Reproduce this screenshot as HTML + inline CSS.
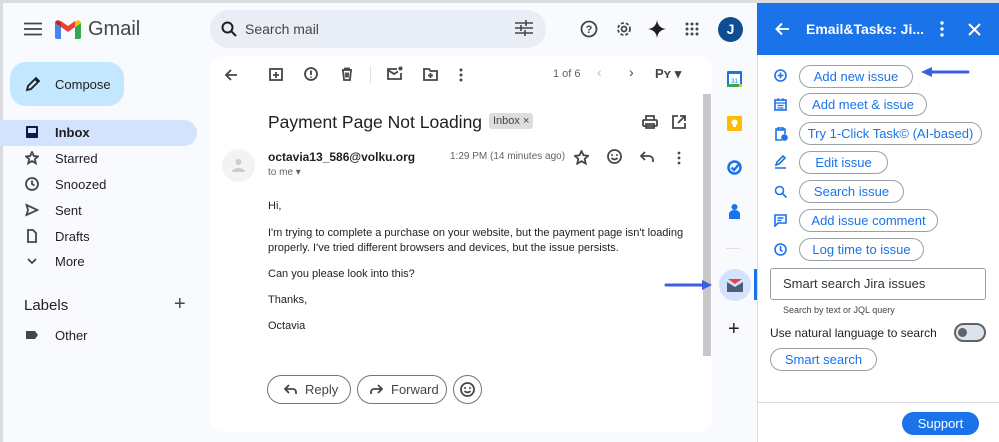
<!DOCTYPE html>
<html><head><meta charset="utf-8"><style>
*{box-sizing:border-box;margin:0;padding:0}
body{width:999px;height:442px;overflow:hidden;background:#f8fafd;font-family:"Liberation Sans",Arial,sans-serif;color:#1f1f1f;position:relative}
.a{position:absolute}
.nav{position:absolute;left:0;width:197px;height:26px;font-size:13px;line-height:26px}
.nav span{position:absolute;left:55px}
.nav svg{position:absolute;left:25px;top:5px}
.ic{fill:none;stroke:#444746;stroke-width:1.8}
.pb{position:absolute;left:799px;height:23px;border:1px solid #9aa0a6;border-radius:12px;color:#1a73e8;font-size:13px;line-height:21px;text-align:center;background:#fff}
.pi{position:absolute;left:774px;stroke:#1a73e8;fill:none;stroke-width:1.6}
.body{font-size:11px;color:#222;position:absolute;left:268px}
.rb{position:absolute;top:375px;height:29px;border:1px solid #747775;border-radius:15px;font-size:13px;line-height:27px;color:#444}
</style></head><body>
<div class="a" style="left:0;top:0;width:999px;height:3px;background:#dadce0"></div>
<div class="a" style="left:0;top:0;width:3px;height:442px;background:#dadce0"></div>
<svg class="a" style="left:24px;top:22px" width="18" height="14"><path d="M0 1.5h18M0 7h18M0 12.5h18" stroke="#444746" stroke-width="1.8"/></svg>
<svg class="a" style="left:55px;top:19px" width="26" height="20" viewBox="0 0 26 20"><path d="M0 4v14a2 2 0 002 2h4V8z" fill="#4285f4"/><path d="M26 4v14a2 2 0 01-2 2h-4V8z" fill="#34a853"/><path d="M6 8l7 5 7-5V2l-7 5-7-5z" fill="#ea4335"/><path d="M0 4a3 3 0 015-2l1 0.7V8L0 4z" fill="#c5221f"/><path d="M26 4a3 3 0 00-5-2l-1 .7V8z" fill="#fbbc04"/></svg>
<div class="a" style="left:88px;top:18px;font-size:20px;color:#444746">Gmail</div>
<div class="a" style="left:210px;top:10px;width:336px;height:38px;border-radius:19px;background:#e9eef6"></div>
<svg class="a" style="left:221px;top:21px" width="16" height="16"><circle cx="6.5" cy="6.5" r="5" fill="none" stroke="#1f1f1f" stroke-width="2"/><path d="M10 10l5 5" stroke="#1f1f1f" stroke-width="2"/></svg>
<div class="a" style="left:245px;top:21px;font-size:14px;color:#444746">Search mail</div>
<svg class="a" style="left:515px;top:20px" width="18" height="16"><path d="M0 3h18M0 8h18M0 13h18" stroke="#444746" stroke-width="1.6"/><path d="M11 0v6M6 5v6M10 10v6" stroke="#444746" stroke-width="1.6"/></svg>
<svg class="a" style="left:580px;top:20px" width="18" height="18"><circle cx="9" cy="9" r="7.5" class="ic" stroke-width="1.6"/><text x="9" y="13" font-size="11" text-anchor="middle" fill="#444746" font-family="Liberation Sans" font-weight="bold">?</text></svg>
<svg class="a" style="left:615px;top:20px" width="18" height="18"><circle cx="9" cy="9" r="6" class="ic" stroke-width="3" stroke-dasharray="3 2"/><circle cx="9" cy="9" r="2.5" class="ic" stroke-width="1.6"/></svg>
<svg class="a" style="left:648px;top:20px" width="18" height="18"><path d="M9 0Q10 8 18 9Q10 10 9 18Q8 10 0 9Q8 8 9 0z" fill="#1f1f1f"/></svg>
<svg class="a" style="left:685px;top:22px" width="14" height="14"><g fill="#444746"><circle cx="2" cy="2" r="1.5"/><circle cx="7" cy="2" r="1.5"/><circle cx="12" cy="2" r="1.5"/><circle cx="2" cy="7" r="1.5"/><circle cx="7" cy="7" r="1.5"/><circle cx="12" cy="7" r="1.5"/><circle cx="2" cy="12" r="1.5"/><circle cx="7" cy="12" r="1.5"/><circle cx="12" cy="12" r="1.5"/></g></svg>
<div class="a" style="left:718px;top:17px;width:25px;height:25px;border-radius:50%;background:#0f4c91;color:#fff;font-size:14px;font-weight:bold;text-align:center;line-height:25px">J</div>
<div class="a" style="left:10px;top:62px;width:114px;height:44px;border-radius:16px;background:#c2e7ff"></div>
<svg class="a" style="left:25px;top:76px" width="16" height="16"><path d="M2 14l1-4 8-8 3 3-8 8z M10 3l3 3" fill="none" stroke="#1f1f1f" stroke-width="1.8"/></svg>
<div class="a" style="left:55px;top:77px;font-size:13px;font-weight:500">Compose</div>
<div class="nav" style="top:120px;background:#d3e3fd;border-radius:0 13px 13px 0;font-weight:bold"><svg width="14" height="14"><rect x="1" y="1" width="12" height="12" rx="1" fill="#041e49"/><rect x="3" y="3" width="8" height="5" fill="#d3e3fd"/></svg><span>Inbox</span></div>
<div class="nav" style="top:146px"><svg width="14" height="14"><path d="M7 1l1.8 4 4.2.4-3.2 2.8 1 4.1L7 10.1 3.2 12.3l1-4.1L1 5.4l4.2-.4z" class="ic" stroke-width="1.3"/></svg><span>Starred</span></div>
<div class="nav" style="top:172px"><svg width="14" height="14"><circle cx="7" cy="7" r="6" class="ic" stroke-width="1.4"/><path d="M7 3.5V7l2.5 1.5" class="ic" stroke-width="1.4"/></svg><span>Snoozed</span></div>
<div class="nav" style="top:198px"><svg width="14" height="14"><path d="M1.5 2l11 5-11 5 1.5-5z" class="ic" stroke-width="1.4"/></svg><span>Sent</span></div>
<div class="nav" style="top:224px"><svg width="14" height="14"><path d="M3 1h5l3 3v9H3z" class="ic" stroke-width="1.4"/></svg><span>Drafts</span></div>
<div class="nav" style="top:249px"><svg width="14" height="14"><path d="M3 5l4 4 4-4" class="ic" stroke-width="1.4"/></svg><span>More</span></div>
<div class="a" style="left:24px;top:297px;font-size:15px;font-weight:500">Labels</div>
<div class="a" style="left:174px;top:293px;font-size:20px;color:#444746">+</div>
<div class="nav" style="top:323px"><svg width="14" height="14"><path d="M1 3h9l3 4-3 4H1z" fill="#444746"/></svg><span>Other</span></div>
<div class="a" style="left:210px;top:56px;width:502px;height:376px;background:#fff;border-radius:14px"></div>
<div class="a" style="left:703px;top:94px;width:8px;height:262px;background:#c7c7c7"></div>
<svg class="a" style="left:224px;top:68px" width="14" height="14"><path d="M13 7H2M7 2L2 7l5 5" class="ic" stroke-width="1.6"/></svg>
<svg class="a" style="left:269px;top:67px" width="14" height="14"><rect x="1" y="2" width="12" height="11" class="ic" stroke-width="1.5"/><path d="M7 5v6M4 8h6" class="ic" stroke-width="1.5"/></svg>
<svg class="a" style="left:304px;top:67px" width="14" height="14"><circle cx="7" cy="7" r="6" class="ic" stroke-width="1.5"/><path d="M7 3.5v4.5M7 9.5v1.2" class="ic" stroke-width="1.5"/></svg>
<svg class="a" style="left:340px;top:67px" width="14" height="14"><path d="M2 3h10M5 3V1.5h4V3M3 3l1 10h6l1-10M6 5.5v5M8 5.5v5" class="ic" stroke-width="1.4"/></svg>
<div class="a" style="left:370px;top:66px;width:1px;height:18px;background:#e0e0e0"></div>
<svg class="a" style="left:387px;top:66px" width="16" height="15"><path d="M10 3H1v10h13V7" class="ic" stroke-width="1.5"/><path d="M1 4l6 4 4-2.5" class="ic" stroke-width="1.4"/><circle cx="13.5" cy="2.5" r="2" fill="#444746"/></svg>
<svg class="a" style="left:423px;top:67px" width="15" height="14"><path d="M1 2h5l1.5 2H14v9H1z" class="ic" stroke-width="1.4"/><path d="M7.5 6v5M5 8.5h5" class="ic" stroke-width="1.4"/></svg>
<svg class="a" style="left:459px;top:68px" width="4" height="14"><circle cx="2" cy="2" r="1.5" fill="#444746"/><circle cx="2" cy="7" r="1.5" fill="#444746"/><circle cx="2" cy="12" r="1.5" fill="#444746"/></svg>
<div class="a" style="left:553px;top:68px;font-size:11px;color:#5f6368">1 of 6</div>
<div class="a" style="left:597px;top:64px;font-size:14px;color:#bbb">&#8249;</div>
<div class="a" style="left:629px;top:64px;font-size:14px;color:#444">&#8250;</div>
<div class="a" style="left:655px;top:66px;font-size:13px;color:#444;font-weight:bold">Pʏ ▾</div>
<div class="a" style="left:268px;top:112px;font-size:17.5px;color:#1f1f1f">Payment Page Not Loading</div>
<div class="a" style="left:489px;top:113px;height:16px;padding:0 4px;background:#ddd;font-size:11px;color:#444;line-height:16px;border-radius:3px">Inbox ×</div>
<svg class="a" style="left:642px;top:115px" width="16" height="14"><rect x="1" y="5" width="14" height="6" rx="1" class="ic" stroke-width="1.5"/><path d="M4 5V1h8v4M4 9h8v4H4z" class="ic" stroke-width="1.5"/></svg>
<svg class="a" style="left:672px;top:115px" width="14" height="14"><path d="M6 1H1v12h12V8M8 1h5v5M13 1L6 8" class="ic" stroke-width="1.5"/></svg>
<div class="a" style="left:222px;top:149px;width:33px;height:33px;border-radius:50%;background:#f1f3f4"></div>
<svg class="a" style="left:232px;top:158px" width="13" height="14"><circle cx="6.5" cy="4" r="3" fill="#ccc"/><path d="M0 14a6.5 4 0 0113 0z" fill="#ccc"/></svg>
<div class="a" style="left:268px;top:150px;font-size:12px;font-weight:bold;color:#1f1f1f">octavia13_586@volku.org</div>
<div class="a" style="left:268px;top:167px;font-size:10px;color:#5f6368">to me ▾</div>
<div class="a" style="left:450px;top:151px;font-size:10px;color:#5f6368">1:29 PM (14 minutes ago)</div>
<svg class="a" style="left:574px;top:150px" width="15" height="15"><path d="M7.5 1l2 4.3 4.7.5-3.5 3.2 1 4.6-4.2-2.4-4.2 2.4 1-4.6L.8 5.8l4.7-.5z" class="ic" stroke-width="1.4"/></svg>
<svg class="a" style="left:607px;top:149px" width="15" height="15"><circle cx="7.5" cy="7.5" r="6.5" class="ic" stroke-width="1.4"/><circle cx="5" cy="6" r="1" fill="#444746"/><circle cx="10" cy="6" r="1" fill="#444746"/><path d="M4.5 9q3 3 6 0" class="ic" stroke-width="1.3"/></svg>
<svg class="a" style="left:640px;top:151px" width="14" height="12"><path d="M5 1L1 5l4 4M1 5h8a4 4 0 014 4v2" class="ic" stroke-width="1.5"/></svg>
<svg class="a" style="left:677px;top:151px" width="4" height="14"><circle cx="2" cy="2" r="1.4" fill="#444746"/><circle cx="2" cy="7" r="1.4" fill="#444746"/><circle cx="2" cy="12" r="1.4" fill="#444746"/></svg>
<div class="body" style="top:200px">Hi,</div>
<div class="body" style="top:226px;line-height:15px">I'm trying to complete a purchase on your website, but the payment page isn't loading<br>properly. I've tried different browsers and devices, but the issue persists.</div>
<div class="body" style="top:268px">Can you please look into this?</div>
<div class="body" style="top:294px">Thanks,</div>
<div class="body" style="top:320px">Octavia</div>
<div class="rb" style="left:267px;width:84px"><svg style="position:absolute;left:16px;top:8px" width="13" height="11"><path d="M5 1L1 5l4 4M1 5h8a3 3 0 013 3v2" class="ic" stroke-width="1.5"/></svg><span style="position:absolute;left:37px">Reply</span></div>
<div class="rb" style="left:357px;width:90px"><svg style="position:absolute;left:12px;top:8px" width="13" height="11"><path d="M8 1l4 4-4 4M12 5H4a3 3 0 00-3 3v2" class="ic" stroke-width="1.5"/></svg><span style="position:absolute;left:33px">Forward</span></div>
<div class="rb" style="left:453px;width:29px"><svg style="position:absolute;left:6px;top:6px" width="15" height="15"><circle cx="7.5" cy="7.5" r="6.5" class="ic" stroke-width="1.4"/><circle cx="5" cy="6" r="1" fill="#444746"/><circle cx="10" cy="6" r="1" fill="#444746"/><path d="M4.5 9q3 3 6 0" class="ic" stroke-width="1.3"/></svg></div>
<svg class="a" style="left:727px;top:71px" width="15" height="16"><rect x="0" y="0" width="15" height="16" rx="1" fill="#1a73e8"/><rect x="2" y="3" width="11" height="11" fill="#fff"/><path d="M0 13h15v3H0z" fill="#34a853"/><path d="M12 13h3v3h-3z" fill="#fbbc04"/><text x="7.5" y="12" font-size="6" text-anchor="middle" fill="#1a73e8" font-family="Liberation Sans">31</text></svg>
<svg class="a" style="left:727px;top:116px" width="15" height="15"><rect width="15" height="15" rx="1" fill="#fbbc04"/><circle cx="7.5" cy="6.5" r="3" fill="#fff"/><rect x="6" y="9" width="3" height="2" fill="#fff"/></svg>
<svg class="a" style="left:727px;top:160px" width="15" height="15"><circle cx="7.5" cy="7.5" r="6" fill="none" stroke="#1a73e8" stroke-width="2.5"/><path d="M4.5 7.5l2.5 2.5 6-7" fill="none" stroke="#1a73e8" stroke-width="2.3"/></svg>
<svg class="a" style="left:729px;top:204px" width="11" height="15"><circle cx="5.5" cy="3" r="3" fill="#1a73e8"/><path d="M0 15V10a5.5 4 0 0111 0v5z" fill="#1a73e8"/></svg>
<div class="a" style="left:726px;top:248px;width:14px;height:1px;background:#e0e0e0"></div>
<svg class="a" style="left:664px;top:279px" width="50" height="12"><path d="M2 6h38" stroke="#3d5ee0" stroke-width="3" stroke-linecap="round"/><path d="M38 1l10 5-10 5z" fill="#3d5ee0"/></svg>
<div class="a" style="left:719px;top:269px;width:32px;height:32px;border-radius:50%;background:#d3e3fd"></div>
<svg class="a" style="left:727px;top:279px" width="16" height="13"><path d="M0 3l8 5 8-5v10H0z" fill="#4e5d78"/><path d="M1 0h14L8 5z" fill="#ea4335"/></svg>
<div class="a" style="left:754px;top:269px;width:3px;height:31px;background:#1a73e8"></div>
<div class="a" style="left:728px;top:318px;font-size:20px;color:#1f1f1f">+</div>
<div class="a" style="left:757px;top:3px;width:242px;height:439px;background:#fff;border-left:1px solid #dadce0"></div>
<div class="a" style="left:757px;top:3px;width:242px;height:52px;background:#1a73e8"></div>
<svg class="a" style="left:775px;top:22px" width="15" height="14"><path d="M14 7H2M7 1.5L1.5 7 7 12.5" fill="none" stroke="#fff" stroke-width="2"/></svg>
<div class="a" style="left:806px;top:21px;font-size:14px;font-weight:bold;color:#fff">Email&amp;Tasks: Ji...</div>
<svg class="a" style="left:940px;top:21px" width="4" height="16"><circle cx="2" cy="2" r="1.7" fill="#fff"/><circle cx="2" cy="8" r="1.7" fill="#fff"/><circle cx="2" cy="14" r="1.7" fill="#fff"/></svg>
<svg class="a" style="left:968px;top:23px" width="13" height="13"><path d="M1 1l11 11M12 1L1 12" stroke="#fff" stroke-width="2"/></svg>
<svg class="pi" style="top:69px" width="13" height="13"><circle cx="6.5" cy="6.5" r="5.5"/><path d="M6.5 3.5v6M3.5 6.5h6"/></svg>
<div class="pb" style="top:65px;width:114px">Add new issue</div>
<svg class="a" style="left:920px;top:66px" width="50" height="12"><path d="M10 6h38" stroke="#3d5ee0" stroke-width="3" stroke-linecap="round"/><path d="M12 1L1 6l11 5z" fill="#3d5ee0"/></svg>
<svg class="pi" style="top:98px" width="13" height="13"><rect x="1" y="2" width="11" height="10"/><path d="M1 5h11M4 0v3M9 0v3M3.5 7.5h6M3.5 10h6" stroke-width="1.2"/></svg>
<div class="pb" style="top:93px;width:128px">Add meet &amp; issue</div>
<svg class="pi" style="top:127px" width="14" height="14"><path d="M9 2h2v5M4 2H2v11h6"/><rect x="4" y="1" width="5" height="2"/><circle cx="10.5" cy="10.5" r="2.5" fill="#1a73e8"/></svg>
<div class="pb" style="top:122px;width:183px">Try 1-Click Task© (AI-based)</div>
<svg class="pi" style="top:155px" width="13" height="14"><path d="M2 10l1-3 6-6 2 2-6 6zM1 13h11"/></svg>
<div class="pb" style="top:151px;width:89px">Edit issue</div>
<svg class="pi" style="top:185px" width="13" height="13"><circle cx="5.5" cy="5.5" r="4"/><path d="M8.5 8.5l4 4"/></svg>
<div class="pb" style="top:180px;width:105px">Search issue</div>
<svg class="pi" style="top:214px" width="13" height="13"><path d="M1 1h11v8H4l-3 3z M3.5 4h6M3.5 6.5h4"/></svg>
<div class="pb" style="top:209px;width:139px">Add issue comment</div>
<svg class="pi" style="top:243px" width="13" height="13"><circle cx="6.5" cy="6.5" r="5.5"/><path d="M6.5 3v4l2 1.5"/></svg>
<div class="pb" style="top:238px;width:125px">Log time to issue</div>
<div class="a" style="left:770px;top:268px;width:216px;height:32px;border:1px solid #9aa0a6;border-radius:3px;font-size:13px;color:#333;padding-left:12px;line-height:30px">Smart search Jira issues</div>
<div class="a" style="left:783px;top:305px;font-size:9px;color:#444">Search by text or JQL query</div>
<div class="a" style="left:770px;top:326px;font-size:12px;color:#1f1f1f">Use natural language to search</div>
<div class="a" style="left:954px;top:323px;width:32px;height:19px;border-radius:10px;background:#dde3ea;border:2px solid #5f6368"></div>
<div class="a" style="left:958px;top:328px;width:9px;height:9px;border-radius:50%;background:#5f6368"></div>
<div class="pb" style="left:770px;top:348px;width:107px">Smart search</div>
<div class="a" style="left:757px;top:402px;width:242px;height:1px;background:#dadce0"></div>
<div class="a" style="left:902px;top:412px;width:77px;height:23px;border-radius:12px;background:#1a73e8;color:#fff;font-size:13px;text-align:center;line-height:23px">Support</div>
</body></html>
